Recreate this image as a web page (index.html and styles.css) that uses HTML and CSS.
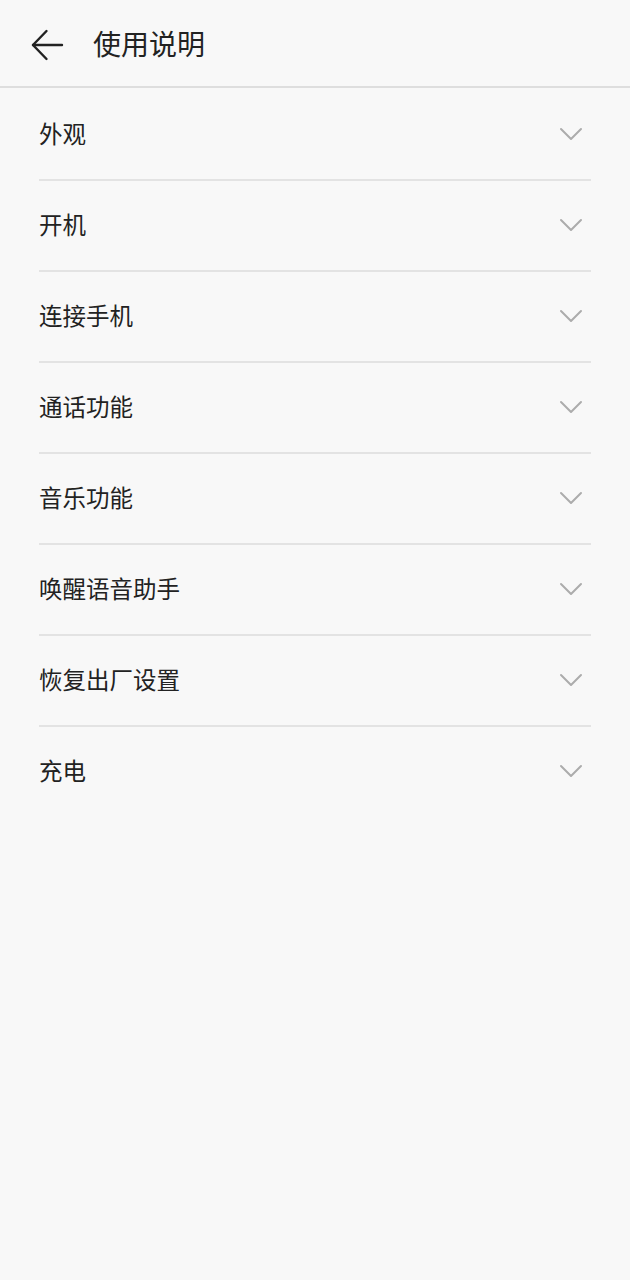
FILE: index.html
```html
<!DOCTYPE html>
<html lang="zh-CN">
<head>
<meta charset="utf-8">
<title>使用说明</title>
<link rel="stylesheet" href="styles.css">
</head>
<body>
<header class="topbar">
  <span class="back">
    <svg width="34" height="34" viewBox="0 0 34 34" fill="none" stroke="#222" stroke-width="2.4" stroke-linecap="round" stroke-linejoin="round">
      <path d="M3 17H32"/>
      <path d="M16.5 3L3 17L16.5 31"/>
    </svg>
  </span>
  <h1 class="title">使用说明</h1>
</header>
<ul class="list">
  <li class="row"><span class="label">外观</span><span class="chev"><svg width="24" height="14" viewBox="0 0 24 14" fill="none" stroke="#acacac" stroke-width="2" stroke-linecap="round" stroke-linejoin="round"><path d="M2 2L12 12L22 2"/></svg></span></li>
  <li class="row"><span class="label">开机</span><span class="chev"><svg width="24" height="14" viewBox="0 0 24 14" fill="none" stroke="#acacac" stroke-width="2" stroke-linecap="round" stroke-linejoin="round"><path d="M2 2L12 12L22 2"/></svg></span></li>
  <li class="row"><span class="label">连接手机</span><span class="chev"><svg width="24" height="14" viewBox="0 0 24 14" fill="none" stroke="#acacac" stroke-width="2" stroke-linecap="round" stroke-linejoin="round"><path d="M2 2L12 12L22 2"/></svg></span></li>
  <li class="row"><span class="label">通话功能</span><span class="chev"><svg width="24" height="14" viewBox="0 0 24 14" fill="none" stroke="#acacac" stroke-width="2" stroke-linecap="round" stroke-linejoin="round"><path d="M2 2L12 12L22 2"/></svg></span></li>
  <li class="row"><span class="label">音乐功能</span><span class="chev"><svg width="24" height="14" viewBox="0 0 24 14" fill="none" stroke="#acacac" stroke-width="2" stroke-linecap="round" stroke-linejoin="round"><path d="M2 2L12 12L22 2"/></svg></span></li>
  <li class="row"><span class="label">唤醒语音助手</span><span class="chev"><svg width="24" height="14" viewBox="0 0 24 14" fill="none" stroke="#acacac" stroke-width="2" stroke-linecap="round" stroke-linejoin="round"><path d="M2 2L12 12L22 2"/></svg></span></li>
  <li class="row"><span class="label">恢复出厂设置</span><span class="chev"><svg width="24" height="14" viewBox="0 0 24 14" fill="none" stroke="#acacac" stroke-width="2" stroke-linecap="round" stroke-linejoin="round"><path d="M2 2L12 12L22 2"/></svg></span></li>
  <li class="row"><span class="label">充电</span><span class="chev"><svg width="24" height="14" viewBox="0 0 24 14" fill="none" stroke="#acacac" stroke-width="2" stroke-linecap="round" stroke-linejoin="round"><path d="M2 2L12 12L22 2"/></svg></span></li>
</ul>
</body>
</html>
```
FILE: styles.css
```css
html, body {
  margin: 0;
  padding: 0;
  background: #f8f8f8;
}
body {
  font-family: "Noto Sans CJK SC", "Noto Sans", sans-serif;
  color: #222;
  min-height: 1280px;
}
.topbar {
  height: 86px;
  border-bottom: 2px solid #dedede;
  display: flex;
  align-items: center;
  padding-left: 30px;
  box-sizing: content-box;
}
.back {
  width: 34px;
  height: 34px;
  display: flex;
  margin-top: 3px;
}
.title {
  margin: 0 0 0 29px;
  font-size: 28px;
  font-weight: 400;
  line-height: 1;
  color: #222;
}
.list {
  list-style: none;
  margin: 0 39px;
  padding: 2px 0 0;
}
.row {
  height: 89px;
  display: flex;
  align-items: center;
  justify-content: space-between;
  border-bottom: 2px solid #e3e3e3;
}
.row:last-child {
  border-bottom: none;
}
.label {
  font-size: 23.5px;
  line-height: 1;
  color: #222;
  margin-top: -1px;
}
.chev {
  display: flex;
  margin-right: 8px;
  margin-top: -2px;
}
```
